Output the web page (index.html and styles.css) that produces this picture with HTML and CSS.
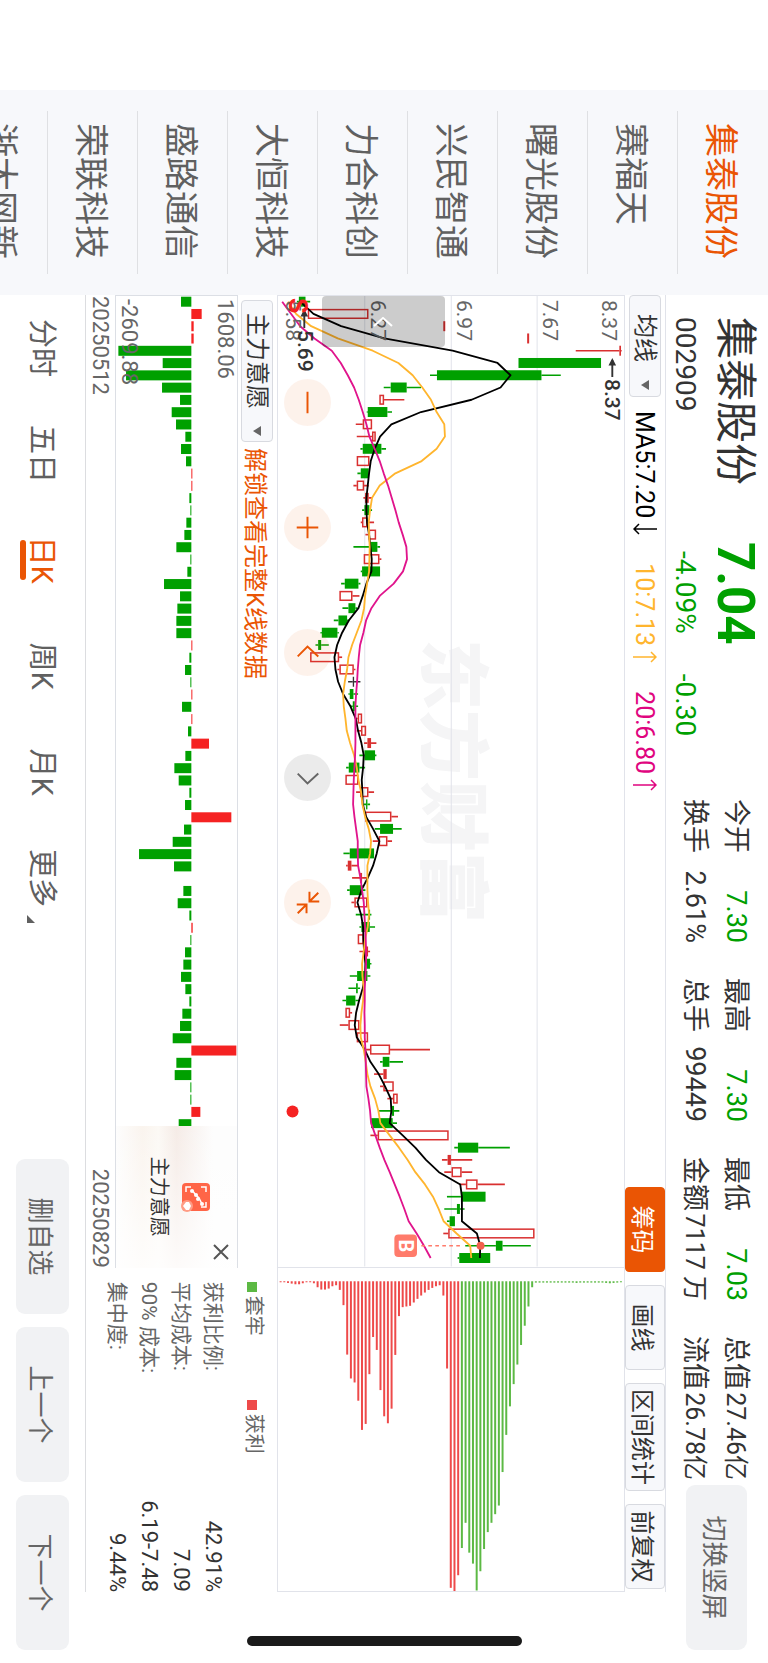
FILE: index.html
```html
<!DOCTYPE html>
<html lang="zh-CN">
<head>
    <meta charset="UTF-8">
    <meta name="viewport" content="width=device-width, initial-scale=1.0">
    <title>集泰股份 002909</title>
    <link rel="stylesheet" href="styles.css">
</head>
<body>

    <!-- landscape screen, turned to fit a portrait window -->
    <div class="screen">
        <nav class="stocks">
            <a href="#" class="active">集泰股份</a>
            <a href="#">赛福天</a>
            <a href="#">曙光股份</a>
            <a href="#">兴民智通</a>
            <a href="#">力合科创</a>
            <a href="#">大恒科技</a>
            <a href="#">盛路通信</a>
            <a href="#">荣联科技</a>
            <a href="#">浙大网新</a>
        </nav>

        <main class="content">
            <header class="quote">
                <div class="quote-name">
                    <h1>集泰股份</h1>
                    <span class="code">002909</span>
                </div>
                <div class="quote-price down">
                    <strong>7.04</strong>
                    <div class="change"><span>-4.09%</span><span>-0.30</span></div>
                </div>
                <dl class="stats">
                    <div><dt>今开</dt><dd class="down">7.30</dd></div>
                    <div><dt>最高</dt><dd class="down">7.30</dd></div>
                    <div><dt>最低</dt><dd class="down">7.03</dd></div>
                    <div><dt>总值</dt><dd class="cap">27.46亿</dd></div>
                    <div><dt>换手</dt><dd>2.61%</dd></div>
                    <div><dt>总手</dt><dd>99449</dd></div>
                    <div><dt>金额</dt><dd class="cap">7117 万</dd></div>
                    <div><dt>流值</dt><dd class="cap">26.78亿</dd></div>
                </dl>
                <button type="button" class="btn btn-switch">切换竖屏</button>
            </header>

            <div class="toolbar">
                <span class="picker">
                    <select aria-label="主图指标"><option>均线</option></select>
                </span>
                <div class="ma">
                    <span class="ma5">MA5:7.20<svg viewBox="0 0 12 24"><path d="M6 0V23M1 18L6 23L11 18"/></svg></span>
                    <span class="ma10">10:7.13<svg viewBox="0 0 12 24"><path d="M6 24V1M1 6L6 1L11 6"/></svg></span>
                    <span class="ma20">20:6.80<svg viewBox="0 0 12 24"><path d="M6 24V1M1 6L6 1L11 6"/></svg></span>
                </div>
                <div class="tools">
                    <button type="button" class="on">筹码</button>
                    <button type="button">画线</button>
                    <button type="button">区间统计</button>
                    <button type="button">前复权</button>
                </div>
            </div>

            <div class="charts">
                <section class="kline">
                    <div class="watermark">东方财富</div>
                    <svg id="kline" viewBox="0 0 2916 1041"></svg>
                    <ul class="axis">
                        <li>8.37</li>
                        <li>7.67</li>
                        <li>6.97</li>
                        <li>6.27</li>
                        <li>5.58</li>
                    </ul>
                    <span class="mark mark-high"><svg viewBox="0 0 20 12"><path d="M2 6H20"/><path class="head" d="M0 6L8 2V10Z"/></svg>8.37</span>
                    <span class="mark mark-low"><svg viewBox="0 0 20 12"><path d="M2 6H20"/><path class="head" d="M0 6L8 2V10Z"/></svg>5.69</span>
                    <span class="sell">S</span>
                    <button type="button" class="drawer" aria-label="收起"><svg viewBox="0 0 10 20"><path d="M9 1L1 10L9 19"/></svg></button>
                    <div class="controls">
                        <button type="button" aria-label="缩小"><svg viewBox="0 0 48 48"><path d="M13 24H35"/></svg></button>
                        <button type="button" aria-label="放大"><svg viewBox="0 0 48 48"><path d="M13 24H35M24 13V35"/></svg></button>
                        <button type="button" aria-label="左移"><svg viewBox="0 0 48 48"><path d="M28 13L18 24L28 34"/></svg></button>
                        <button type="button" aria-label="右移" class="gray"><svg viewBox="0 0 48 48"><path d="M20 13L30 24L20 34"/></svg></button>
                        <button type="button" aria-label="退出全屏"><svg viewBox="0 0 48 48"><path d="M14 13L23 22M13 22H23V12M35 34L26 25M35 25H26V35"/></svg></button>
                    </div>
                </section>
                <section class="chips">
                    <svg id="chips" viewBox="0 0 975 1041"></svg>
                </section>
            </div>

            <div class="lower">
                <section class="force">
                    <div class="force-bar">
                        <span class="picker">
                            <select aria-label="副图指标"><option>主力意愿</option></select>
                        </span>
                        <a href="#">解锁查看完整K线数据</a>
                    </div>
                    <div class="force-chart">
                        <svg id="force" viewBox="0 0 2916 362"></svg>
                        <span class="max">1608.06</span>
                        <span class="min">-2609.88</span>
                        <div class="promo">
                            <button type="button" aria-label="关闭"><svg viewBox="0 0 16 16"><path d="M1 1L15 15M15 1L1 15"/></svg></button>
                            <svg class="promo-icon" viewBox="0 0 30 30">
                                <rect x="1" y="1" width="28" height="28" rx="4"/>
                                <path d="M5 10V5H10M20 5H25V10M5 20V25H10" />
                                <path d="M8 19L12 16L16 12L22 9"/>
                                <circle cx="9" cy="19" r="2"/><circle cx="13" cy="15" r="2"/><circle cx="17" cy="13" r="2"/><circle cx="22" cy="9" r="2"/>
                                <circle class="lock" cx="24" cy="24" r="6"/>
                                <path class="shield" d="M20 22L24 20L28 22V25L24 28L20 25Z"/>
                            </svg>
                            <span>主力意愿</span>
                        </div>
                    </div>
                    <div class="dates"><span>20250512</span><span>20250829</span></div>
                </section>
                <section class="cost">
                    <div class="legend"><span class="trapped">套牢</span><span class="profit">获利</span></div>
                    <dl>
                        <div><dt>获利比例:</dt><dd>42.91%</dd></div>
                        <div><dt>平均成本:</dt><dd>7.09</dd></div>
                        <div><dt>90% 成本:</dt><dd>6.19-7.48</dd></div>
                        <div><dt>集中度:</dt><dd>9.44%</dd></div>
                    </dl>
                </section>
            </div>

            <footer class="bottom">
                <nav class="periods">
                    <a href="#">分时</a>
                    <a href="#">五日</a>
                    <a href="#" class="active">日K</a>
                    <a href="#">周K</a>
                    <a href="#">月K</a>
                    <a href="#" class="more">更多</a>
                </nav>
                <div class="actions">
                    <button type="button" class="btn">删自选</button>
                    <button type="button" class="btn">上一个</button>
                    <button type="button" class="btn">下一个</button>
                </div>
            </footer>
        </main>

        <div class="home-bar"></div>
    </div>

    <script src="charts.js"></script>
</body>
</html>
```
FILE: styles.css
```css
* {
    box-sizing: border-box;
}
html, body {
    height: 100%;
    margin: 0;
    overflow: hidden;
    background: #fff;
}
body, button, select {
    font-family: Roboto, "Noto Sans CJK SC", sans-serif;
    color: #333;
}
h1, dl, dd, ul {
    margin: 0;
    padding: 0;
}
a {
    color: inherit;
    text-decoration: none;
}
button, select {
    border: none;
    padding: 0;
    background: none;
    cursor: pointer;
}
svg {
    display: block;
    fill: none;
}
.screen {
    position: relative;
    display: flex;
    width: 100vh;
    height: 100vw;
    padding-left: 90px;
    overflow: hidden;
    transform: translateX(100vw) rotate(90deg);
    transform-origin: 0 0;
}
.down {
    color: #00a000;
}

/* stock list */
.stocks {
    flex: none;
    width: 205px;
    padding: 1px 21px 0;
    background: #f7f8fb;
    overflow: hidden;
}
.stocks a {
    display: block;
    height: 90px;
    padding-left: 12px;
    border-bottom: 1px solid #dfe0e3;
    font-size: 34px;
    line-height: 92px;
    color: #606060;
}
.stocks .active {
    color: #ea5504;
}

.content {
    flex: 1;
    min-width: 0;
    display: flex;
    flex-direction: column;
}

/* quote header */
.quote {
    display: flex;
    align-items: center;
    height: 102px;
    padding: 0 13px 0 22px;
}
.quote-name {
    width: 225px;
}
h1 {
    font-size: 42px;
    font-weight: 400;
    line-height: 64px;
}
.code, .change {
    display: block;
    font-size: 28px;
    line-height: 36px;
}
.quote-price {
    width: 257px;
}
.quote-price strong {
    display: block;
    font-size: 51px;
    font-weight: 700;
    line-height: 64px;
}
.change {
    display: flex;
    gap: 40px;
    padding-left: 9px;
}
.stats {
    flex: 1;
    display: grid;
    grid-template-columns: repeat(4, 1fr);
    column-gap: 35px;
    padding-top: 4px;
    font-size: 27px;
    line-height: 41px;
    white-space: nowrap;
}
.stats div {
    display: flex;
    justify-content: space-between;
}
.stats .cap {
    font-size: 25px;
}
.btn {
    background: #f1f2f4;
    border-radius: 9px;
    font-size: 26px;
    color: #666;
}
.btn-switch {
    width: 165px;
    height: 61px;
    margin-left: 5px;
}

/* indicator toolbar */
.toolbar {
    display: flex;
    align-items: center;
    height: 41px;
    margin-right: 71px;
    border-top: 1px solid #e1e3ea;
}
.picker {
    position: relative;
    flex: none;
}
.picker select {
    appearance: none;
    height: 32px;
    padding: 0 34px 0 18px;
    border: 1px solid #d8dae0;
    border-radius: 4px;
    background: #f7f8fb;
    font-size: 24px;
    line-height: 30px;
}
.picker::after {
    content: "";
    position: absolute;
    right: 7px;
    top: 12px;
    border: 5px solid transparent;
    border-top: 8px solid #666;
    border-bottom: none;
    pointer-events: none;
}
.ma {
    flex: 1;
    display: flex;
    gap: 28px;
    padding-left: 14px;
    font-size: 25px;
    color: #000;
}
.ma span {
    display: flex;
    align-items: center;
    gap: 5px;
}
.ma svg {
    width: 12px;
    height: 24px;
    stroke: currentColor;
    stroke-width: 1.5;
}
.ma .ma10 {
    color: #ffb52e;
}
.ma .ma20 {
    color: #e0057f;
}
.tools {
    display: flex;
    gap: 13px;
    padding-right: 3px;
}
.tools button {
    height: 40px;
    min-width: 85px;
    padding: 0 5px;
    border: 1px solid #d8dae0;
    border-radius: 4px;
    background: #f7f8fb;
    font-size: 24px;
}
.tools .on {
    border-color: #ea5504;
    background: #ea5504;
    color: #fff;
}

/* charts */
.charts {
    display: flex;
    margin-right: 71px;
    border: 1px solid #e1e3ea;
}
.kline {
    position: relative;
    flex: 972;
    min-width: 0;
}
.kline > svg {
    position: relative;
    width: 100%;
}
.chips {
    flex: 324;
    min-width: 0;
    border-left: 1px solid #e1e3ea;
}
.watermark {
    position: absolute;
    left: 343px;
    top: 122px;
    font-size: 71px;
    font-weight: 900;
    line-height: 100px;
    color: #f5f5f6;
}
.axis {
    position: absolute;
    inset: 0 auto 3px 4px;
    display: flex;
    flex-direction: column;
    list-style: none;
    font-size: 21px;
    line-height: 24px;
    color: #666;
}
.axis li {
    flex: 1;
    display: flex;
    align-items: flex-end;
}
.axis li:first-child {
    flex: none;
    align-items: flex-start;
    height: 0;
    line-height: 30px;
}
.mark {
    position: absolute;
    display: flex;
    align-items: center;
    gap: 2px;
    font-size: 21px;
    font-weight: 500;
    line-height: 24px;
}
.mark svg {
    width: 19px;
    stroke: #333;
    stroke-width: 2;
}
.mark .head {
    fill: #333;
    stroke: none;
}
.mark-high {
    left: 62px;
    top: 0;
}
.mark-low {
    left: 13px;
    bottom: 15px;
}
.sell {
    position: absolute;
    left: 2px;
    bottom: 5px;
    font-size: 25px;
    font-weight: 700;
    line-height: 28px;
    color: #f52222;
}
.drawer {
    position: absolute;
    left: 0;
    top: 179px;
    width: 51px;
    height: 123px;
    padding-left: 21px;
    border-radius: 4px;
    background: rgba(0, 0, 0, 0.2);
}
.drawer svg {
    width: 10px;
    stroke: #fff;
    stroke-width: 2;
}
.controls {
    position: absolute;
    left: 83px;
    bottom: 6px;
    display: flex;
    gap: 78px;
}
.controls button {
    width: 47px;
    height: 47px;
    border-radius: 50%;
    background: rgba(234, 85, 4, 0.08);
}
.controls svg {
    stroke: #ea5504;
    stroke-width: 2;
}
.controls .gray {
    background: rgba(0, 0, 0, 0.08);
}
.controls .gray svg {
    stroke: #666;
}

/* main force panel and cost panel */
.lower {
    display: flex;
    margin-right: 71px;
    border-bottom: 1px solid #dcdde0;
}
.force {
    flex: 1;
    min-width: 0;
}
.force-bar {
    display: flex;
    align-items: center;
    gap: 6px;
    height: 39px;
    padding-left: 5px;
    font-size: 24px;
    color: #ea5504;
}
.force-bar select {
    width: 142px;
    padding: 0 0 0 12px;
}
.force-bar .picker::after {
    right: 6px;
}
.force-chart {
    position: relative;
    border: 1px solid #dcdfe5;
    border-right: none;
}
.force-chart > svg {
    width: 100%;
}
.force-chart > span {
    position: absolute;
    left: 3px;
    font-size: 22px;
    line-height: 24px;
    color: #666;
}
.max {
    top: 0;
}
.min {
    bottom: 1px;
}
.promo {
    position: absolute;
    right: 0;
    top: 0;
    bottom: 0;
    width: 142px;
    display: flex;
    flex-direction: column;
    align-items: center;
    padding-top: 26px;
    background: linear-gradient(to right, transparent, #fffc), linear-gradient(#fdfdfd 20%, #f5ebe6 50%, #fcf9f5 65%, #faf4ee 78%, #fdfdfd);
    font-size: 20px;
    line-height: 28px;
}
.promo button {
    position: absolute;
    top: 8px;
    right: 8px;
    width: 16px;
    height: 16px;
}
.promo button svg {
    stroke: #555;
    stroke-width: 2;
}
.promo-icon {
    width: 30px;
    margin-bottom: 8px;
    stroke: #fff;
    stroke-width: 1.5;
}
.promo-icon rect {
    fill: #ff6547;
    stroke: none;
}
.promo-icon circle {
    fill: #fff;
    stroke: none;
}
.promo-icon .lock {
    fill: #ff9c85;
}
.promo-icon .shield {
    fill: #fff;
    stroke: none;
}
.dates {
    display: flex;
    justify-content: space-between;
    padding-left: 1px;
    font-size: 22px;
    line-height: 29px;
    color: #666;
}
.cost {
    flex: none;
    width: 25%;
    padding-left: 14px;
    color: #666;
}
.legend {
    display: flex;
    gap: 64px;
    height: 48px;
    font-size: 20px;
    line-height: 46px;
}
.legend span::before {
    content: "";
    display: inline-block;
    width: 10px;
    height: 10px;
    margin-right: 4px;
    background: #5cb944;
}
.legend .profit::before {
    background: #ee4a4a;
}
.cost dl div {
    display: flex;
    justify-content: space-between;
    font-size: 21px;
    line-height: 32px;
}
.cost dd {
    font-size: 22px;
    color: #333;
}

/* bottom bar */
.bottom {
    flex: 1;
    display: flex;
    align-items: center;
    justify-content: space-between;
    padding-right: 13px;
}
.periods {
    display: flex;
    font-size: 29px;
    line-height: 56px;
    color: #606060;
}
.periods a {
    position: relative;
    width: 106px;
    text-align: center;
}
.periods .active {
    color: #ea5504;
}
.periods .active::after {
    content: "";
    position: absolute;
    left: 33px;
    bottom: 6px;
    width: 40px;
    height: 6px;
    border-radius: 3px;
    background: #ea5504;
}
.more::after {
    content: "";
    position: absolute;
    right: 8px;
    bottom: 13px;
    border-left: 8px solid transparent;
    border-bottom: 8px solid #606060;
}
.actions {
    display: flex;
    gap: 13px;
}
.actions .btn {
    width: 155px;
    height: 53px;
}
.home-bar {
    position: absolute;
    right: 17px;
    top: calc(50% - 138px);
    width: 10px;
    height: 275px;
    border-radius: 5px;
    background: #1a1a1a;
}
```
FILE: charts.js
```js
const GREEN = "#00a000";
const RED = "#d93030";
const STEP = 36.84;
const FIRST = 17;

// [kind, low, body bottom, body top, high]; g = down, r = up, f = thin up, k = flat
const candles = [
    ["g", 82, 88, 108, 122], ["r", 115, 115, 297, 297], ["f", 522, 522, 528, 528], ["f", 774, 774, 780, 780],
    ["f", 920, 1051, 1056, 1058], ["g", 748, 748, 996, 996], ["g", 482, 503, 817, 875], ["g", 343, 364, 412, 455],
    ["r", 330, 330, 344, 405], ["g", 292, 295, 354, 368], ["r", 259, 280, 308, 308], ["r", 262, 308, 319, 319],
    ["g", 273, 280, 336, 350], ["r", 262, 262, 300, 300], ["g", 264, 274, 298, 298], ["r", 252, 262, 284, 298],
    ["f", 282, 287, 298, 308], ["g", 278, 285, 300, 308], ["r", 274, 278, 294, 314], ["r", 288, 298, 320, 320],
    ["g", 252, 300, 324, 332], ["r", 283, 283, 330, 336], ["g", 274, 278, 332, 332], ["g", 215, 226, 267, 273],
    ["r", 210, 210, 249, 270], ["g", 219, 237, 258, 264], ["g", 193, 207, 233, 240], ["g", 153, 157, 204, 208],
    ["g", 138, 146, 155, 178], ["r", 122, 122, 209, 218], ["r", 204, 210, 253, 258], ["k", 236, 250, 254, 273],
    ["g", 237, 241, 252, 266], ["g", 243, 250, 256, 266], ["r", 256, 265, 278, 278], ["r", 262, 275, 290, 290],
    ["f", 284, 294, 305, 321], ["g", 270, 285, 317, 321], ["g", 230, 238, 270, 287], ["r", 228, 228, 267, 267],
    ["r", 260, 272, 297, 314], ["g", 282, 290, 294, 302], ["r", 287, 287, 366, 386], ["g", 316, 332, 371, 397],
    ["r", 310, 328, 354, 368], ["g", 222, 241, 314, 314], ["f", 230, 235, 246, 266], ["f", 248, 272, 278, 294],
    ["g", 233, 241, 280, 288], ["r", 246, 255, 294, 294], ["g", 259, 296, 302, 306], ["g", 270, 276, 301, 317],
    ["r", 265, 265, 283, 283], ["f", 270, 284, 296, 302], ["g", 288, 292, 302, 306], ["g", 241, 263, 294, 303],
    ["g", 237, 260, 265, 272], ["g", 219, 230, 258, 270], ["r", 228, 228, 242, 248], ["r", 211, 237, 270, 270],
    ["r", 262, 262, 296, 296], ["r", 290, 302, 362, 482], ["g", 332, 340, 360, 401], ["f", 314, 342, 352, 352],
    ["r", 332, 342, 373, 373], ["r", 354, 371, 385, 385], ["g", 329, 368, 374, 390], ["g", 305, 305, 370, 383],
    ["r", 303, 325, 538, 538], ["g", 555, 566, 627, 722], ["f", 518, 535, 545, 609], ["r", 525, 547, 577, 609],
    ["r", 570, 590, 625, 707], ["g", 533, 575, 649, 649], ["g", 525, 563, 572, 586], ["g", 533, 541, 557, 557],
    ["r", 522, 537, 796, 796], ["g", 588, 680, 700, 785], ["g", 565, 570, 663, 663]
];

const ma5 = [92, 132, 215, 345, 550, 685, 724, 694, 607, 455, 366, 332, 316, 304, 299, 295, 291, 291, 293, 299,
    303, 307, 306, 291, 280, 267, 238, 218, 203, 195, 198, 206, 221, 243, 259, 266, 276, 283, 281, 277,
    279, 280, 290, 311, 330, 322, 311, 295, 276, 264, 275, 281, 282, 284, 288, 287, 280, 269, 260, 256,
    262, 286, 303, 328, 347, 364, 366, 361, 400, 438, 470, 509, 573, 578, 578, 578, 623, 633, 632];
const ma10 = [55, 80, 125, 205, 310, 387, 430, 459, 485, 502, 525, 527, 502, 457, 378, 331, 308, 302, 298, 299,
    301, 300, 299, 293, 287, 284, 276, 262, 248, 237, 233, 226, 221, 223, 228, 232, 242, 254, 262, 267,
    275, 279, 287, 298, 305, 302, 294, 294, 294, 296, 299, 295, 287, 283, 278, 279, 283, 281, 276, 273,
    274, 283, 289, 294, 303, 317, 327, 333, 361, 389, 415, 438, 467, 491, 508, 523, 562, 603, 606];
const ma20 = [38, 65, 92, 135, 187, 214, 235, 254, 268, 280, 291, 300, 316, 331, 343, 356, 367, 378, 388, 400,
    411, 413, 401, 373, 331, 306, 290, 282, 272, 268, 265, 263, 260, 258, 258, 258, 258, 257, 255, 253,
    252, 251, 255, 260, 265, 265, 266, 273, 278, 283, 285, 287, 289, 290, 290, 288, 286, 286, 285, 286,
    286, 288, 289, 290, 291, 297, 302, 305, 318, 331, 345, 361, 376, 391, 405, 418, 442, 464, 484];

const force = [-31, 31, 7, 7, -219, -86, -196, -88, -34, -59, -46, -18, -31, -16, 3, 3, -6, -3, -15, -21,
    -45, -3, -12, -82, -34, -42, -45, -45, 3, -6, -19, -3, 3, -28, 3, -10, 53, -18, -51, -38,
    -6, -19, 120, -22, -56, -157, -52, 0, -24, -41, -6, 4, -3, -19, -24, -31, -18, -6, -27, -34,
    -56, 135, -45, -50, -3, -3, 27, -38];

const chips = [3, 3, 5, 7, 9, 9, 6, 3, 3, 6, 18, 25, 25, 22, 15, 12, 26, 72, 221, 293, 305, 360, 448, 430,
    280, 168, 207, 328, 407, 428, 384, 222, 105, 78, 76, 74, 64, 53, 43, 34, 26, 20, 15, 12, 43, 263,
    924, 936, 886, 804, 728, 818, 851, 932, 874, 807, 756, 728, 702, 676, 575, 463, 377, 310, 251, 192,
    134, 76, 18, 4, 4, 4, 4, 4, 4, 4, 4, 4, 4, 4, 5, 4, 4, 4, 4, 4, 4, 4, 5, 6, 5, 4, 3];
const PROFIT_BARS = 49;

const x = i => FIRST + i * STEP;
const y = v => 1065 - v;

function rect(left, top, width, height, attrs) {
    return `<rect x="${left}" y="${top}" width="${width}" height="${height}" ${attrs}/>`;
}

function line(values, color) {
    const points = values.map((v, i) => `${x(i)},${y(v)}`).join(" ");
    return `<polyline points="${points}" stroke="${color}" stroke-width="5.5" stroke-linejoin="round"/>`;
}

function drawKline() {
    let out = "";
    [261, 519, 779].forEach(top => {
        out += `<path d="M0 ${top}H2916" stroke="#e1e3ea" stroke-width="3"/>`;
    });
    candles.forEach(([kind, low, bottom, top, high], i) => {
        const color = { g: GREEN, k: "#333" }[kind] || RED;
        out += `<path d="M${x(i)} ${y(low)}V${y(bottom)}M${x(i)} ${y(top)}V${y(high)}" stroke="${color}" stroke-width="5"/>`;
        if (kind === "r") {
            out += rect(x(i) - 13, y(top) + 2, 26, Math.max(top - bottom - 4, 4), `stroke="${color}" stroke-width="4.5"`);
        } else {
            out += rect(x(i) - 15, y(top), 30, top - bottom, `fill="${color}"`);
        }
    });
    out += line(ma5, "#000") + line(ma10, "#ffb52e") + line(ma20, "#e0148c");

    // buy point and event dot
    const bx = x(77);
    out += `<path d="M${bx} ${y(456)}V${y(575)}" stroke="#ff7b6b" stroke-width="5" stroke-dasharray="11 10"/>`;
    out += `<circle cx="${bx}" cy="${y(634)}" r="12" fill="#f2604d"/>`;
    out += rect(bx - 34, y(443), 68, 68, `rx="12" fill="#ff7b6b"`);
    out += `<text x="${bx}" y="${y(388)}" text-anchor="middle" font-size="60" font-weight="700" fill="#fff">B</text>`;
    out += `<circle cx="2450" cy="${y(69)}" r="18" fill="#f52222"/>`;
    document.getElementById("kline").innerHTML = out;
}

function drawForce() {
    document.getElementById("force").innerHTML = force.map((v, i) =>
        rect(x(i) - 15, v > 0 ? 137 - v : 137, 30, Math.abs(v), `fill="${v > 0 ? "#f52222" : GREEN}"`)
    ).join("");
}

function drawChips() {
    document.getElementById("chips").innerHTML = chips.map((v, i) =>
        rect(40, y(30 + i * 11.15) - 3, v, 6, `fill="${i < PROFIT_BARS ? "#ee4a4a" : "#5cb944"}"`)
    ).join("");
}

drawKline();
drawForce();
drawChips();
```
